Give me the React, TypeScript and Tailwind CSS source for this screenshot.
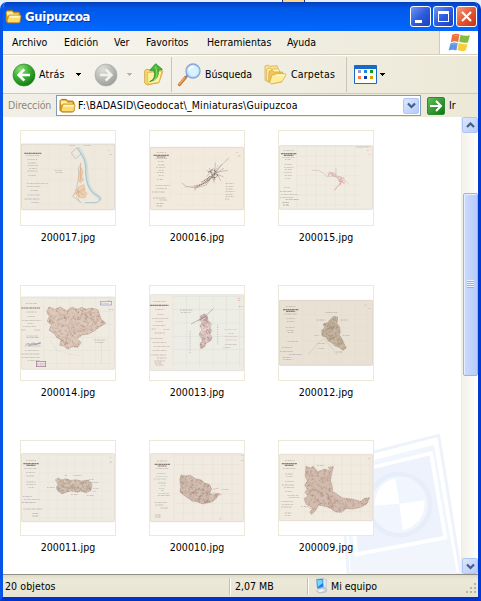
import React from "react";

type Pt = [number, number];
type Line = [number, number, number, string?];

/* Small repeatable generator, so the relief strokes are stable between renders. */
function makeRandom(seed: number) {
  let s = seed;
  return () => {
    s = (s * 16807) % 2147483647;
    return s / 2147483647;
  };
}

function Relief({ id, points, color, fill, seed, count }: { id: string; points: string; color: string; fill: string; seed: number; count: number }) {
  const nums = points.split(/[ ,]+/).map(Number);
  const pts: Pt[] = [];
  for (let i = 0; i + 1 < nums.length; i += 2) pts.push([nums[i], nums[i + 1]]);
  const xs = pts.map((p) => p[0]);
  const ys = pts.map((p) => p[1]);
  const x0 = Math.min(...xs), x1 = Math.max(...xs), y0 = Math.min(...ys), y1 = Math.max(...ys);
  const r = makeRandom(seed);
  let d = "";
  for (let i = 0; i < count; i++) {
    const x = x0 + r() * (x1 - x0);
    const y = y0 + r() * (y1 - y0);
    d += `M${x.toFixed(1)} ${y.toFixed(1)}q${(r() * 14 - 7).toFixed(1)} ${(r() * 14 - 7).toFixed(1)} ${(r() * 18 - 9).toFixed(1)} ${(r() * 18 - 9).toFixed(1)}`;
  }
  return (
    <g>
      <clipPath id={id}><polygon points={points} /></clipPath>
      <polygon points={points} fill={fill} stroke={color} strokeWidth="1.3" strokeDasharray="5 2" />
      <path d={d} clipPath={`url(#${id})`} fill="none" stroke={color} strokeWidth="1.5" opacity="0.5" />
    </g>
  );
}

/* Rows of tiny illegible captions: centre x, y, width and ink. */
function Captions({ rows }: { rows: Line[] }) {
  return (
    <g>
      {rows.map(([cx, y, w, c], i) => (
        <path key={i} d={`M${cx - w / 2} ${y}h${w}`} stroke={c ?? "#8d857c"} strokeWidth={c === "#4c4640" ? 3.5 : 2} strokeDasharray={c === "#4c4640" ? "7 1 4 1" : "4 1 2 2 6 1"} opacity="0.65" />
      ))}
    </g>
  );
}

function Grid({ x, y, w, h, step, color = "#dedbd0" }: { x: number; y: number; w: number; h: number; step: number; color?: string }) {
  let d = "";
  for (let i = x; i <= x + w; i += step) d += `M${i} ${y}v${h}`;
  for (let j = y; j <= y + h; j += step) d += `M${x} ${j}h${w}`;
  return <path d={d} stroke={color} strokeWidth="1.3" fill="none" />;
}

function Sheet({ view, top, height, color, edge, children }: { view: number; top: number; height: number; color: string; edge: string; children: React.ReactNode }) {
  return (
    <svg className="block size-24 bg-white" viewBox={`${view} 30 288 288`}>
      <rect x={view + 4} y={top} width="280" height={height} rx="3" fill={color} stroke={edge} strokeWidth="2" />
      {children}
      <rect x={view + 1.5} y="31.5" width="285" height="285" fill="none" stroke="#ece9d8" strokeWidth="3" />
    </svg>
  );
}

const DARK = "#4c4640";

const Map17 = () => (
  <Sheet view={60} top={72} height={197} color="#eee8dd" edge="#d3cdc2">
    <Grid x={110} y={76} w={220} h={190} step={35} color="#ebe3d8" />
    <path d="M234 82c12 20 24 34 25 56c2 32 0 60 24 82c10 10 19 13 17 22" fill="none" stroke="#cde0df" strokeWidth="10" />
    <path d="M231 83c10 16 24 30 26 55c0 27 0 58 22 81l21 12q4 12-12 17h-34" fill="none" stroke="#93b0b3" strokeWidth="2" />
    <path d="M243 132l-8 12 2 25-5 25-6 23-8 12 16 12 8 8M231 82l-17 17 12 17 17-14" fill="none" stroke="#a89589" strokeWidth="1.3" />
    <path d="M242 142l7 13-4 15 6 10-10 9-7-15zM236 200l16-6 2 19 7 7-7 14-15-2-11-9z" fill="#ecd0b1" stroke="#d8b086" strokeWidth="1.5" />
    <path d="M227 210l26 15m-20-20l4 28m-14-11l34-16m-28 23l13 18m0-119v54" stroke="#cf9f7e" strokeWidth="1.5" />
    <Captions rows={[[99, 100, 52, DARK], [99, 107, 40], [97, 119, 29], [97, 129, 24], [98, 136, 31], [99, 145, 24], [97, 153, 29], [97, 166, 24], [112, 190, 62], [102, 200, 42], [103, 211, 22, "#887894"], [101, 225, 38, "#9993ac"], [96, 237, 44, "#80798f"], [106, 247, 24, "#8e829b"], [175, 151, 22], [177, 157, 20], [217, 76, 15], [262, 76, 18], [328, 91, 9, "#df8f88"], [333, 103, 9]]} />
  </Sheet>
);

const Map16 = () => (
  <Sheet view={27} top={82} height={187} color="#f3eade" edge="#dacfc1">
    <Grid x={90} y={86} w={185} h={170} step={34} color="#ece3d7" />
    <path d="M267 113l-35 35-15 22-19 17-30 17-30-5-12-10m40 15l33-9 26-37 38-7m-47 20l-32 22-23 5m47-54l13 39m24-50l-28 40-21 4m27-31l19 36m-42-30l50 18m-46 4l48-29m-87 51v16m55-67l-20 25m26-43l-4 61" fill="none" stroke="#8d827b" strokeWidth="1.2" />
    <path d="M205 157l11-8 10 4-4 10 12 3-9 8-16-5-9 9-16 8m28-33l12 25m-27 12l18-17" fill="none" stroke="#5d5753" strokeWidth="2.5" strokeDasharray="3 2" />
    <path d="M204 178l-12 12-24 10" fill="none" stroke="#5d5753" strokeWidth="3" strokeDasharray="3 3" />
    <path d="M234 136l-14 33-48 30-38 2" fill="none" stroke="#ce9d92" strokeWidth="1.5" strokeDasharray="5 2" />
    <Captions rows={[[64, 97, 29], [64, 106, 47, DARK], [64, 111, 27, DARK], [64, 116, 36], [63, 124, 18], [64, 135, 20], [62, 143, 28], [64, 151, 16], [62, 158, 24], [63, 167, 14], [60, 179, 18], [68, 196, 43], [65, 206, 31], [56, 216, 40], [58, 234, 38], [71, 240, 25], [60, 250, 20, "#766f6a"], [58, 258, 17, "#766f6a"], [292, 97, 9, "#df807b"], [298, 108, 8], [270, 191, 26], [270, 199, 25], [268, 207, 21], [270, 215, 28], [268, 223, 22], [270, 230, 26], [261, 237, 12]]} />
  </Sheet>
);

const Map15 = () => (
  <Sheet view={24} top={77} height={191} color="#f1ece2" edge="#dad2c4">
    <Grid x={80} y={80} w={190} h={185} step={29} color="#e4dfd4" />
    <path d="M125 151h20l15 8 10 10h28l10 8 10-2 18 17M198 144v25m-26-10h24m-18-5l18 15 18 20-22 22m8-39l14-2m-7 8l10 8" fill="none" stroke="#a29892" strokeWidth="1" />
    <path d="M174 163l12-5 12 9 11 4 15 4m-19 0l6 14-18 22m18-33l12 13m-8-18l-4 23m-5-13l18 6m-45-28l-5 8m15-10l-2 10m-5-6l14 7m15 9l14 4" fill="none" stroke="#e0a19a" strokeWidth="2.3" strokeDasharray="4 1" />
    <Captions rows={[[56, 91, 30], [56, 101, 46, DARK], [56, 106, 29, DARK], [55, 112, 36], [54, 119, 18], [55, 133, 23], [56, 142, 28], [55, 149, 20], [54, 157, 23], [55, 166, 22], [53, 175, 15], [51, 202, 17], [48, 215, 37, "#767494"], [58, 223, 50], [51, 232, 42], [67, 239, 40, "#686482"], [47, 248, 19, "#56534e"], [48, 255, 18, "#56534e"], [280, 81, 42], [295, 91, 9, "#df807b"], [299, 104, 8, "#ce9a91"]]} />
  </Sheet>
);

const Map14 = () => (
  <Sheet view={30} top={66} height={217} color="#f0ebe1" edge="#ded7ca">
    <Grid x={101} y={70} w={208} h={210} step={39} color="#dce0d7" />
    <Relief id="relief14" points="117,96 135,103 150,95 169,107 186,96 202,103 214,97 229,103 243,99 264,104 273,131 287,145 267,157 253,168 237,177 216,180 202,191 214,203 203,217 186,215 174,223 162,214 149,211 153,195 141,188 131,174 117,166 124,149 111,139 118,124 110,111" color="#a27d6d" fill="#dcc9bb" seed={41} count={500} />
    <rect x="271" y="79" width="34" height="11" fill="none" stroke="#9896cf" strokeWidth="2" />
    <rect x="79" y="259" width="28" height="16" fill="none" stroke="#9d7295" strokeWidth="2" />
    <path d="M47 208l8-2 6 2 8-4 11 3 12-5m-38 9l24-3 14-3" fill="none" stroke="#8984a0" strokeWidth="2" />
    <path d="M274 198v69M122 198l18 27 35 12 36 5" fill="none" stroke="#dfb7af" strokeWidth="1.3" strokeDasharray="4 3" />
    <Captions rows={[[64, 85, 34], [62, 99, 56, DARK], [64, 111, 30], [64, 125, 24], [65, 137, 58], [61, 145, 18], [60, 155, 41], [41, 165, 13], [82, 165, 17], [68, 187, 36, "#7667b4"], [66, 183, 36, "#9691cb"], [68, 213, 47], [66, 226, 43], [62, 237, 54], [63, 248, 54], [71, 257, 35], [92, 265, 24, "#a77298"], [92, 270, 23, "#8b75af"], [303, 103, 14], [269, 195, 34], [269, 203, 27], [286, 85, 25, "#9090c8"], [298, 76, 10, "#cf8c91"]]} />
  </Sheet>
);

const Map13 = () => (
  <Sheet view={27} top={59} height={228} color="#edede5" edge="#dad9d0">
    <rect x="32" y="61" width="67" height="220" fill="#f1ebe2" />
    <Grid x={99} y={64} w={210} h={210} step={40} color="#d8ddd6" />
    <Relief id="relief13" points="181,123 194,116 202,123 204,136 214,147 210,158 215,166 210,178 216,189 211,198 199,204 194,216 183,221 180,207 187,197 182,186 177,177 186,165 180,153 186,143 180,134" color="#a97978" fill="#e2d3cc" seed={78} count={210} />
    <path d="M153 147l42-22 25-24m-38 29l11-8 9 4-12 12m-16-1l13-6" fill="none" stroke="#8a8887" strokeWidth="1.5" />
    <path d="M150 168v68m83-87v62" stroke="#a4a7a8" strokeWidth="2" strokeDasharray="3 4" />
    <Captions rows={[[59, 79, 38], [58, 91, 55, DARK], [59, 104, 27], [61, 119, 18], [61, 130, 49], [59, 139, 25], [57, 151, 38], [41, 162, 12], [80, 163, 17], [59, 174, 30], [51, 190, 37], [59, 203, 42], [65, 215, 48], [59, 226, 43], [56, 240, 44], [65, 249, 28], [59, 258, 32], [54, 264, 20, "#86709f"], [60, 270, 25], [298, 71, 10, "#df7773"], [298, 76, 10, "#df7773"], [302, 95, 12], [139, 105, 38], [137, 113, 29], [272, 164, 37, "#dc9b9b"], [273, 175, 13], [273, 184, 38, "#c3a19c"], [273, 195, 35, "#dc9b9b"], [273, 208, 37], [260, 217, 20]]} />
  </Sheet>
);

const Map12 = () => (
  <Sheet view={24} top={76} height={195} color="#e9e1d3" edge="#d4cabd">
    <Grid x={98} y={80} w={200} h={185} step={39} color="#e2dacd" />
    <Relief id="relief12" points="182,132 191,124 203,126 201,146 208,154 211,169 208,180 216,192 223,207 229,219 219,226 207,217 196,213 187,204 174,197 169,187 156,183 155,166 164,159 160,147 173,143" color="#92806d" fill="#c8b7a3" seed={92} count={270} />
    <path d="M115 237l46-48 42 51m-34-49l25 23" fill="none" stroke="#c1c1b4" strokeWidth="1.5" />
    <Captions rows={[[62, 95, 29], [62, 104, 46, DARK], [62, 109, 27, DARK], [62, 117, 38], [62, 130, 27], [62, 139, 23], [61, 157, 27], [62, 166, 21], [62, 173, 17], [68, 199, 31], [51, 218, 29], [50, 230, 40], [76, 238, 38, "#807890"], [51, 248, 26], [53, 254, 27], [184, 113, 36], [153, 135, 26], [222, 135, 20], [140, 181, 13], [228, 181, 20], [154, 205, 23], [154, 220, 17], [208, 231, 19], [287, 90, 8, "#df918a"], [299, 100, 9, "#cc8c80"]]} />
  </Sheet>
);

const Map11 = () => (
  <Sheet view={30} top={71} height={204} color="#f0ebe2" edge="#ddd7cb">
    <Grid x={87} y={75} w={215} h={195} step={27} color="#dfe2d9" />
    <Relief id="relief11" points="136,149 145,144 153,150 168,146 181,151 198,149 215,153 235,150 246,163 243,181 229,189 213,183 202,187 185,183 170,186 156,192 144,183 139,174 144,163" color="#a28b7b" fill="#d5c5b6" seed={63} count={260} />
    <Captions rows={[[63, 91, 30], [63, 101, 46, DARK], [63, 106, 27, DARK], [62, 116, 38], [62, 128, 28], [62, 138, 25], [63, 156, 28], [64, 164, 29], [64, 173, 17], [52, 199, 27, "#756c88"], [65, 208, 47], [57, 218, 43, "#6e657c"], [68, 237, 56], [76, 251, 17, "#625e59"], [76, 258, 17, "#625e59"], [169, 136, 10], [203, 136, 27], [244, 149, 16], [254, 158, 24], [123, 173, 24], [258, 175, 17], [254, 184, 8], [193, 193, 20], [241, 197, 21], [302, 83, 9, "#da8d83"], [304, 96, 9]]} />
  </Sheet>
);

const Map10 = () => (
  <Sheet view={417} top={71} height={204} color="#f0eae0" edge="#d9d2c7">
    <Grid x={492} y={75} w={200} h={195} step={29} color="#e3ded3" />
    <Relief id="relief10" points="513,135 526,138 541,136 556,146 572,149 584,159 599,164 605,177 599,190 611,194 627,190 619,205 607,215 594,218 579,222 560,215 546,213 533,203 520,195 510,185 512,167 509,151" color="#98796b" fill="#d2bfb2" seed={29} count={280} />
    <path d="M609 178l18-4m-18 14l25 5-22 8" fill="none" stroke="#ce9f8d" strokeWidth="1.5" />
    <Captions rows={[[456, 93, 31], [457, 103, 46, DARK], [457, 108, 27, DARK], [457, 116, 37], [455, 130, 26], [455, 140, 35, "#96acad"], [450, 147, 39, "#86aaab"], [457, 159, 24], [459, 167, 15, "#7db8b5"], [455, 175, 15, "#689dac"], [458, 181, 8, "#518499"], [461, 190, 31, "#9992a9"], [462, 197, 37, "#8177a0"], [453, 218, 37], [449, 225, 23], [463, 234, 22], [444, 255, 17, "#767c82"], [444, 261, 17, "#767c82"], [632, 267, 9, "#93a8ba"], [645, 178, 22], [698, 76, 8, "#d48a80"], [697, 91, 8]]} />
  </Sheet>
);

const Map9 = () => (
  <Sheet view={24} top={73} height={199} color="#f1eadf" edge="#ddd5c9">
    <Grid x={104} y={77} w={197} h={188} step={28} color="#e2dfd5" />
    <Relief id="relief9" points="108,109 121,114 130,109 143,125 165,117 182,124 175,112 190,110 185,131 181,151 187,170 187,183 201,193 218,204 246,207 272,214 284,205 299,203 290,222 272,232 250,237 228,236 214,247 197,246 181,235 170,230 145,225 137,241 125,253 120,247 128,234 109,223 102,206 114,198 105,187 112,178 104,165 112,153 106,139" color="#9a7667" fill="#d2bcaf" seed={58} count={440} />
    <path d="M115 232l16 8 15-10m-25 13l4 10" fill="none" stroke="#daa39a" strokeWidth="2" strokeDasharray="4 1" />
    <Captions rows={[[59, 91, 29], [58, 101, 45, DARK], [58, 106, 27, DARK], [58, 116, 38], [58, 132, 25], [58, 140, 19], [59, 155, 27], [54, 165, 36], [57, 173, 30], [56, 185, 22], [69, 196, 33], [72, 202, 31, "#8f829b"], [51, 214, 35], [53, 224, 33], [49, 231, 31], [54, 249, 19], [53, 257, 17], [298, 86, 9, "#d98982"], [151, 106, 20], [103, 230, 20]]} />
  </Sheet>
);

const files = [
  { name: "200017.jpg", Art: Map17 }, { name: "200016.jpg", Art: Map16 }, { name: "200015.jpg", Art: Map15 },
  { name: "200014.jpg", Art: Map14 }, { name: "200013.jpg", Art: Map13 }, { name: "200012.jpg", Art: Map12 },
  { name: "200011.jpg", Art: Map11 }, { name: "200010.jpg", Art: Map10 }, { name: "200009.jpg", Art: Map9 },
];

function FolderIcon() {
  return (
    <svg className="block h-4 w-[17px] shrink-0" viewBox="0 0 51 48">
      <path d="M3 8l4-4h15l4 5h15l4 4v25l-4 4H8l-5-5z" fill="#e2a52c" stroke="#9b6a0b" strokeWidth="2.5" />
      <path d="M5 8h16l5 6h14v6H6z" fill="#fff0a2" />
      <path d="M12 18h34l2 5-4 18H9l-3-5z" fill="#ffdb6f" stroke="#b17d16" strokeWidth="2" />
      <path d="M14 21h30l-1 5H12z" fill="#fff6b9" />
    </svg>
  );
}

function RoundArrow({ kind }: { kind: "back" | "forward" }) {
  const back = kind === "back";
  return (
    <svg className="block size-6 shrink-0" viewBox="0 0 72 72">
      <defs>
        <radialGradient id={kind} cx="35%" cy="25%" r="80%">
          <stop offset="0" stopColor={back ? "#8cdf79" : "#dededb"} />
          <stop offset=".5" stopColor={back ? "#3cae35" : "#bdbdba"} />
          <stop offset="1" stopColor={back ? "#11780f" : "#9b9b99"} />
        </radialGradient>
      </defs>
      <circle cx="36" cy="36" r="33" fill={`url(#${kind})`} stroke={back ? "#2a8b25" : "#adada9"} strokeWidth="2" />
      <path d={back ? "M37 19L20 36l17 17M21 36h33" : "M35 19l17 17-17 17M51 36H18"} fill="none" stroke={back ? "#fff" : "#f1f1ee"} strokeWidth="8" />
    </svg>
  );
}

function Caret({ muted = false }: { muted?: boolean }) {
  return <svg className="block h-[3px] w-[5px] shrink-0" viewBox="0 0 5 3" shapeRendering="crispEdges"><path d="M0 0h5L2.5 3z" fill={muted ? "#b7b5aa" : "#000"} /></svg>;
}

function Chevron({ up = false }: { up?: boolean }) {
  return (
    <div className="flex size-4 shrink-0 items-center justify-center rounded-[2px] border border-[#b0c5f4] bg-linear-to-br from-[#dce7ff] to-[#b5cbf8]">
      <svg className="h-[7px] w-[9px]" viewBox="0 0 9 7"><path d={up ? "M1 5l3.5-3.5L8 5" : "M1 1.5L4.5 5 8 1.5"} fill="none" stroke="#465e86" strokeWidth="2.2" /></svg>
    </div>
  );
}

function UpFolder() {
  return (
    <svg className="block h-6 w-[22px] shrink-0" viewBox="430 187 66 72">
      <path d="M435 211l4-5 10 1 5 5 32-4 3 5-11 33-36 7-7-6z" fill="#f6d869" stroke="#c59328" strokeWidth="2" />
      <path d="M443 216l44-5-9 34-33 6z" fill="#fff0a2" stroke="#d6ab45" strokeWidth="2" />
      <path d="M450 243q20-8 13-34h-13l18-20 20 17-12 2q4 29-26 35z" fill="#48b93d" stroke="#19821b" strokeWidth="2" />
      <path d="M467 197l3 9q6 22-7 32" fill="none" stroke="#94e26f" strokeWidth="3" />
    </svg>
  );
}

function SearchIcon() {
  return (
    <svg className="block h-[26px] w-6 shrink-0" viewBox="532 184 72 78">
      <path d="M558 230l-19 22" stroke="#c4753a" strokeWidth="9" strokeLinecap="round" />
      <path d="M557 229l-18 21" stroke="#f5a652" strokeWidth="5" strokeLinecap="round" />
      <path d="M565 222l-8 9" stroke="#7a8dc0" strokeWidth="7" />
      <circle cx="580" cy="211" r="21" fill="#c4e8fb" stroke="#8fa3d9" strokeWidth="4" />
      <circle cx="581" cy="211" r="17" fill="#d8f3ff" stroke="#a7d7f2" strokeWidth="2" />
      <path d="M568 209q3-12 14-12" fill="none" stroke="#fff" strokeWidth="5" />
    </svg>
  );
}

function FoldersIcon() {
  return (
    <svg className="block h-6 w-[23px] shrink-0" viewBox="73 190 69 72">
      <path d="M76 199l9-3 5 4 22-2 3 8-8 34-23 7-8-5z" fill="#fbe488" stroke="#d2a443" strokeWidth="2" />
      <path d="M81 209l8-4 8 4 17-2 6 5-5 30-27 5-7-6z" fill="#fff2a8" stroke="#d2a443" strokeWidth="2" />
      <path d="M88 215l8-4 7 6h25l3 6-6 24-30 5-8-7z" fill="#f1c65c" stroke="#cf9b34" strokeWidth="2" />
      <path d="M97 226l9-1 4-3h27l2 4-12 20-32 7-5-5z" fill="#ffed9d" stroke="#d2a13b" strokeWidth="2" />
      <path d="M107 227l27-1" stroke="#fffbdc" strokeWidth="3" />
    </svg>
  );
}

function WindowsFlag() {
  return (
    <svg className="block h-[21px] w-[23px]" viewBox="625 95 66 60">
      <path d="M637 103q11-6 21-1l-4 22q-11-5-21 1z" fill="#ef713c" />
      <path d="M661 103q12 5 27 1l-6 21q-13 3-25-3z" fill="#83bc3f" />
      <path d="M632 128q11-6 21-1l-4 21q-11-5-22 0z" fill="#5e96e5" />
      <path d="M656 126q12 6 25 3l-5 19q-13 4-24-2z" fill="#f8cd38" />
      <path d="M642 106q6-3 12 0M636 130q7-3 14 0" stroke="#fff" strokeWidth="2" opacity=".4" fill="none" />
    </svg>
  );
}

function Computer() {
  return (
    <svg className="block h-4 w-[14px]" viewBox="136 443 42 48">
      <path d="M140 447l20-2 3 25-20 5z" fill="#1784e8" stroke="#8fb1d4" strokeWidth="2" />
      <path d="M142 450l15-1 2 9-14 11z" fill="#78d6fb" />
      <path d="M160 445l11 3-2 27-7-5z" fill="#e0e7ef" stroke="#a5b3c5" strokeWidth="1.5" />
      <path d="M150 475l11-4 10 5-2 9-21 3-7-6z" fill="#cbd5e1" stroke="#92a2b6" strokeWidth="1.5" />
      <path d="M143 479l14-3 8 5-15 5z" fill="#edf3fa" />
    </svg>
  );
}

function Watermark() {
  return (
    <svg className="absolute bottom-0 right-0 h-[144px] w-[134px]" viewBox="171 0 402 432">
      <path d="M207 93L506 16l67 416H235z" fill="#fff" stroke="#eef2fb" strokeWidth="9" />
      <path d="M226 112L492 44l53 302-305 57z" fill="#f1f5fd" />
      <path d="M238 129L483 70l43 253-267 50z" fill="#edf2fc" stroke="#fff" strokeWidth="11" />
      <circle cx="388" cy="224" r="92" fill="#f1f5fd" stroke="#e7edf9" strokeWidth="14" />
      <path d="M377 146q-58 8-64 81l75-6zM388 221l76-10q2 70-66 90z" fill="#fff" />
      <path d="M240 403l305-57 16 86H244z" fill="#f2f5fc" />
    </svg>
  );
}

const text = "whitespace-nowrap font-['DejaVu_Sans_Condensed','DejaVu_Sans',sans-serif] font-stretch-condensed text-[10.5px] leading-[13px] text-black";

function Label({ children, className }: { children: React.ReactNode; className: string }) {
  return <span className={`block shrink-0 ${text} ${className}`}>{children}</span>;
}

function Grip() {
  return <div className="flex flex-col gap-px">{[0, 1, 2, 3].map((i) => <div key={i} className="h-px w-[7px] bg-[#8fb0f5] shadow-[0_-1px_0_#eef4ff]" />)}</div>;
}

export default function App() {
  return (
    <div className="flex h-[601px] w-[481px] flex-col overflow-hidden bg-[#e5f0fa]">
      <div className="flex h-0.5 shrink-0 pl-[282px]"><div className="w-[23px] border-x border-[#193b88] bg-[#ffd783]" /></div>
      <div className="flex min-h-0 flex-1 flex-col overflow-hidden rounded-t-[7px] border-b-4 border-l-3 border-r-3 border-b-[#0031c8] border-l-[#0755e8] border-r-[#0039d2] bg-[#ece9d8]">
        <header className="-mx-[3px] flex h-[29px] shrink-0 items-center bg-linear-to-b from-[#063dba] via-[#0057e8] via-20% to-[#0368ff] pl-[5px] pr-1">
          <FolderIcon />
          <span className="ml-[3px] block w-[70px] whitespace-nowrap pt-px font-['DejaVu_Sans_Condensed','DejaVu_Sans',sans-serif] text-[13px] font-bold font-stretch-condensed leading-[16px] tracking-[-0.35px] text-white [text-shadow:1px_1px_#073491]">Guipuzcoa</span>
          <div className="ml-auto flex gap-0.5">
            <div className="flex size-[21px] items-end rounded-[3px] border border-white bg-linear-to-br from-[#7395f0] via-[#2f5cde] to-[#1841be] pb-[3px] pl-1"><div className="h-[3px] w-[7px] bg-white" /></div>
            <div className="flex size-[21px] items-center justify-center rounded-[3px] border border-white bg-linear-to-br from-[#7395f0] via-[#2f5cde] to-[#1841be]"><div className="size-[11px] border border-t-3 border-white" /></div>
            <div className="flex size-[21px] items-center justify-center rounded-[3px] border border-white bg-linear-to-br from-[#f39c7d] via-[#e25735] to-[#c53110]"><svg className="size-[13px]" viewBox="0 0 13 13"><path d="M2 2l9 9M11 2l-9 9" stroke="#fff" strokeWidth="2.2" /></svg></div>
          </div>
        </header>

        <nav className="flex h-6 shrink-0 items-center border-b border-[#d3cfbc] bg-linear-to-r from-[#f7f6f1] to-[#ece9d8] pl-[9px]">
          <Label className="w-[52px]">Archivo</Label>
          <Label className="w-[50px]">Edición</Label>
          <Label className="w-8">Ver</Label>
          <Label className="w-[61px]">Favoritos</Label>
          <Label className="w-[80px]">Herramientas</Label>
          <Label className="w-8">Ayuda</Label>
          <div className="ml-auto flex h-full w-[39px] items-center justify-center border-l border-[#d0ccb9] bg-white"><WindowsFlag /></div>
        </nav>

        <section className="flex h-[39px] shrink-0 items-center border-b border-t border-b-[#cfcbb8] border-t-white bg-linear-to-r from-[#f6f5f0] to-[#ece9d8] pl-[9px]">
          <RoundArrow kind="back" />
          <Label className="ml-[3px] w-[27px] tracking-[0.2px]">Atrás</Label>
          <div className="ml-2.5"><Caret /></div>
          <div className="ml-[13px]"><RoundArrow kind="forward" /></div>
          <div className="ml-[9px]"><Caret muted /></div>
          <div className="ml-[11px]"><UpFolder /></div>
          <div className="ml-1.5 h-[35px] w-px bg-[#c9c6b6]" />
          <div className="ml-[5px]"><SearchIcon /></div>
          <Label className="ml-[4px] w-12">Búsqueda</Label>
          <div className="ml-[11px]"><FoldersIcon /></div>
          <Label className="ml-[4px] w-[46px] tracking-[0.2px]">Carpetas</Label>
          <div className="ml-[9px] h-[35px] w-px bg-[#c9c6b6]" />
          <div className="ml-[7px] h-[19px] w-[23px] rounded-[1px] border border-t-4 border-[#176bc8] bg-white px-[3px] pt-px">
            <div className="grid grid-cols-3 gap-x-[3px] gap-y-[3px]">
              {["bg-[#9a98cf]", "bg-[#1686de]", "bg-[#099d1d]", "bg-[#ff7848]", "bg-[#0d3ba4]", "bg-[#d4a204]"].map((c) => <div key={c} className={`h-[3px] w-[3px] ${c}`} />)}
            </div>
          </div>
          <div className="ml-[3px]"><Caret /></div>
        </section>

        <section className="flex h-[23px] shrink-0 items-center bg-linear-to-r from-[#f1efe6] to-[#ece9d8] pl-[5px]">
          <Label className="w-12 text-[#8b887b]! tracking-[-0.1px]">Dirección</Label>
          <div className="flex h-[21px] w-[365px] items-center border border-[#7f9db9] bg-white pl-0.5 pr-px">
            <FolderIcon />
            <Label className="ml-[2px] w-[221px] tracking-[0.18px]">F:\BADASID\Geodocat\_Miniaturas\Guipuzcoa</Label>
            <div className="ml-auto"><Chevron /></div>
          </div>
          <div className="ml-1.5 flex size-[18px] items-center justify-center rounded-[2px] border border-[#288d31] bg-linear-to-br from-[#5fbf57] to-[#087510]"><svg className="size-[14px]" viewBox="0 0 14 14"><path d="M1 7h11M7 2l5 5-5 5" fill="none" stroke="#fff" strokeWidth="2" /></svg></div>
          <Label className="ml-[4px] w-2.5">Ir</Label>
        </section>

        <div className="flex min-h-0 flex-1">
          <main className="relative flex-1 overflow-hidden bg-white">
            <Watermark />
            <div className="relative grid grid-cols-[repeat(3,96px)] gap-x-[33px] gap-y-[41px] pl-[17px] pt-[13px]">
              {files.map(({ name, Art }) => (
                <figure key={name} className="flex h-[114px] flex-col items-center">
                  <Art />
                  <figcaption className={`mt-[5px] tracking-[0.1px] ${text}`}>{name}</figcaption>
                </figure>
              ))}
            </div>
          </main>
          <aside className="flex w-[17px] shrink-0 flex-col items-center border-l border-[#eeede5] bg-linear-to-r from-[#f3f1ea] to-[#fefefb]">
            <Chevron up />
            <div className="mt-[60px] flex h-[183px] w-[15px] items-center justify-center rounded-[2px] border border-[#98b4ed] bg-linear-to-r from-[#cbdafe] to-[#b8ccf8] shadow-[inset_1px_1px_#e6eeff]"><Grip /></div>
            <div className="mt-auto"><Chevron /></div>
          </aside>
        </div>

        <footer className="flex h-[23px] shrink-0 items-center border-t border-[#918f85] bg-linear-to-b from-[#dedbc9] via-[#ece9d8] via-20% to-[#e7e4d3] pl-0.5">
          <Label className="w-[224px] tracking-[0.1px]">20 objetos</Label>
          <div className="h-[17px] w-0.5 border-l border-r border-l-[#c4c1b1] border-r-white" />
          <Label className="ml-1 w-[72px]">2,07 MB</Label>
          <div className="h-[17px] w-0.5 border-l border-r border-l-[#c4c1b1] border-r-white" />
          <div className="ml-1.5"><Computer /></div>
          <Label className="ml-[2px] w-[47px]">Mi equipo</Label>
          <svg className="ml-auto mt-1 size-[13px]" viewBox="0 0 13 13" shapeRendering="crispEdges"><path d="M9 1h2v2H9zM5 5h2v2H5zM9 5h2v2H9zM1 9h2v2H1zM5 9h2v2H5zM9 9h2v2H9z" fill="#b8b4a2" /></svg>
        </footer>
      </div>
    </div>
  );
}
